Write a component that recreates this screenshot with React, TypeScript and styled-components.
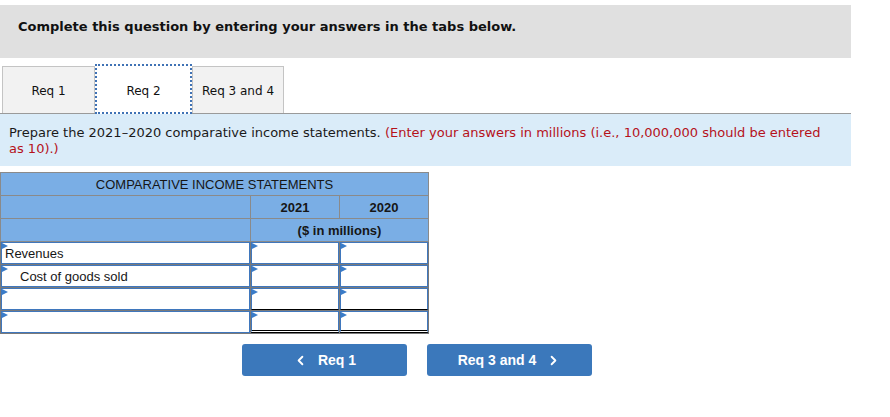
import React from 'react';
import styled, {createGlobalStyle} from 'styled-components';
import {ChevronLeft, ChevronRight} from 'lucide-react';

const GlobalStyle = createGlobalStyle`
  html, body {
    margin: 0;
    padding: 0;
    background: #ffffff;
  }
  body {
    font-family: Verdana, "DejaVu Sans", sans-serif;
    color: #1a1a1a;
  }
`;

const Page = styled.div`
  width: 851px;
  padding-top: 5px;
`;

const Banner = styled.div`
  box-sizing: border-box;
  height: 53px;
  background: #e0e0e0;
  padding: 14px 0 0 18px;
  font-size: 13px;
  line-height: 16px;
  font-weight: bold;
  color: #111;
`;

const TabBar = styled.div`
  display: flex;
  align-items: flex-end;
  margin-top: 6px;
  padding-left: 2px;
  height: 49px;
`;

const Tab = styled.div<{$active?: boolean; $width: number}>`
  box-sizing: border-box;
  display: flex;
  align-items: center;
  justify-content: center;
  font-size: 12px;
  color: #111;
  width: ${p => p.$width}px;
  height: ${p => (p.$active ? 50 : 47)}px;
  background: ${p => (p.$active ? '#ffffff' : '#f2f2f2')};
  border: ${p => (p.$active ? '2px dotted #3f72b5' : '1px solid #c4c4c4')};
  border-bottom: ${p => (p.$active ? '2px dotted #3f72b5' : 'none')};
  margin-bottom: ${p => (p.$active ? -1 : 0)}px;
  position: relative;
  z-index: ${p => (p.$active ? 2 : 1)};
  padding-top: ${p => (p.$active ? 3 : 1)}px;
`;

const InfoBox = styled.div`
  box-sizing: border-box;
  background: #daecf9;
  border-top: 1px solid #9a9a9a;
  padding: 11px 15px 0 9px;
  height: 53px;
  font-size: 13px;
  line-height: 16px;
  color: #1a1a1a;
`;

const Note = styled.span`
  color: #b5121b;
`;

const Sheet = styled.table`
  margin-top: 6px;
  border-collapse: collapse;
  width: 429px;
  table-layout: fixed;
  font-family: Arial, "Liberation Sans", sans-serif;
  font-size: 13px;
  border: 1px solid #8a8a8a;
`;

const HeadCell = styled.th<{$bold?: boolean}>`
  height: 22px;
  padding: 0;
  background: #7aaee5;
  border: 1px solid #8a8a8a;
  color: #161616;
  font-weight: ${p => (p.$bold ? 'bold' : 'normal')};
  text-align: center;
  vertical-align: middle;
`;

const BodyCell = styled.td`
  padding: 0;
  height: 22px;
  border: 1px solid #7a7a7a;
  background: #ffffff;
`;

const Field = styled.div<{$indent?: boolean; $rule?: 'single' | 'double'}>`
  position: relative;
  box-sizing: border-box;
  height: 22px;
  border: 1px solid #3f77bd;
  border-bottom: ${p =>
    p.$rule === 'double'
      ? '3px double #000'
      : p.$rule === 'single'
        ? '1px solid #000'
        : '1px solid #3f77bd'};
  display: flex;
  align-items: center;
  padding-left: ${p => (p.$indent ? 18 : 3)}px;
  color: #161616;
  font-size: 13px;
  white-space: nowrap;

  &::before {
    content: '';
    position: absolute;
    top: 0;
    left: 0;
    border-left: 6px solid #3a7cc8;
    border-top: 3px solid transparent;
    border-bottom: 3px solid transparent;
  }
`;

const ButtonRow = styled.div`
  display: flex;
  gap: 20px;
  margin-top: 10px;
  margin-left: 242px;
`;

const NavButton = styled.button`
  width: 165px;
  height: 32px;
  border: none;
  border-radius: 3px;
  background: #3b78bb;
  color: #ffffff;
  font-family: Arial, "Liberation Sans", sans-serif;
  font-size: 14px;
  font-weight: bold;
  display: flex;
  align-items: center;
  justify-content: center;
  gap: 10px;
  cursor: pointer;
`;

const rows: {label: string; indent?: boolean}[] = [
  {label: 'Revenues'},
  {label: 'Cost of goods sold', indent: true},
  {label: ''},
  {label: ''},
];

export default function App() {
  return (
    <Page>
      <GlobalStyle />
      <Banner>Complete this question by entering your answers in the tabs below.</Banner>
      <TabBar>
        <Tab $width={93}>Req 1</Tab>
        <Tab $width={97} $active>
          Req 2
        </Tab>
        <Tab $width={92}>Req 3 and 4</Tab>
      </TabBar>
      <InfoBox>
        Prepare the 2021–2020 comparative income statements.{' '}
        <Note>(Enter your answers in millions (i.e., 10,000,000 should be entered as 10).)</Note>
      </InfoBox>
      <Sheet>
        <colgroup>
          <col style={{width: 250}} />
          <col style={{width: 89}} />
          <col style={{width: 89}} />
        </colgroup>
        <thead>
          <tr>
            <HeadCell colSpan={3}>COMPARATIVE INCOME STATEMENTS</HeadCell>
          </tr>
          <tr>
            <HeadCell />
            <HeadCell $bold>2021</HeadCell>
            <HeadCell $bold>2020</HeadCell>
          </tr>
          <tr>
            <HeadCell />
            <HeadCell $bold colSpan={2}>
              ($ in millions)
            </HeadCell>
          </tr>
        </thead>
        <tbody>
          {rows.map((row, i) => {
            const rule = i === 2 ? 'single' : i === 3 ? 'double' : undefined;
            return (
              <tr key={i}>
                <BodyCell>
                  <Field $indent={row.indent}>{row.label}</Field>
                </BodyCell>
                <BodyCell>
                  <Field $rule={rule} />
                </BodyCell>
                <BodyCell>
                  <Field $rule={rule} />
                </BodyCell>
              </tr>
            );
          })}
        </tbody>
      </Sheet>
      <ButtonRow>
        <NavButton>
          <ChevronLeft size={15} strokeWidth={3} />
          Req 1
        </NavButton>
        <NavButton>
          Req 3 and 4
          <ChevronRight size={15} strokeWidth={3} />
        </NavButton>
      </ButtonRow>
    </Page>
  );
}
